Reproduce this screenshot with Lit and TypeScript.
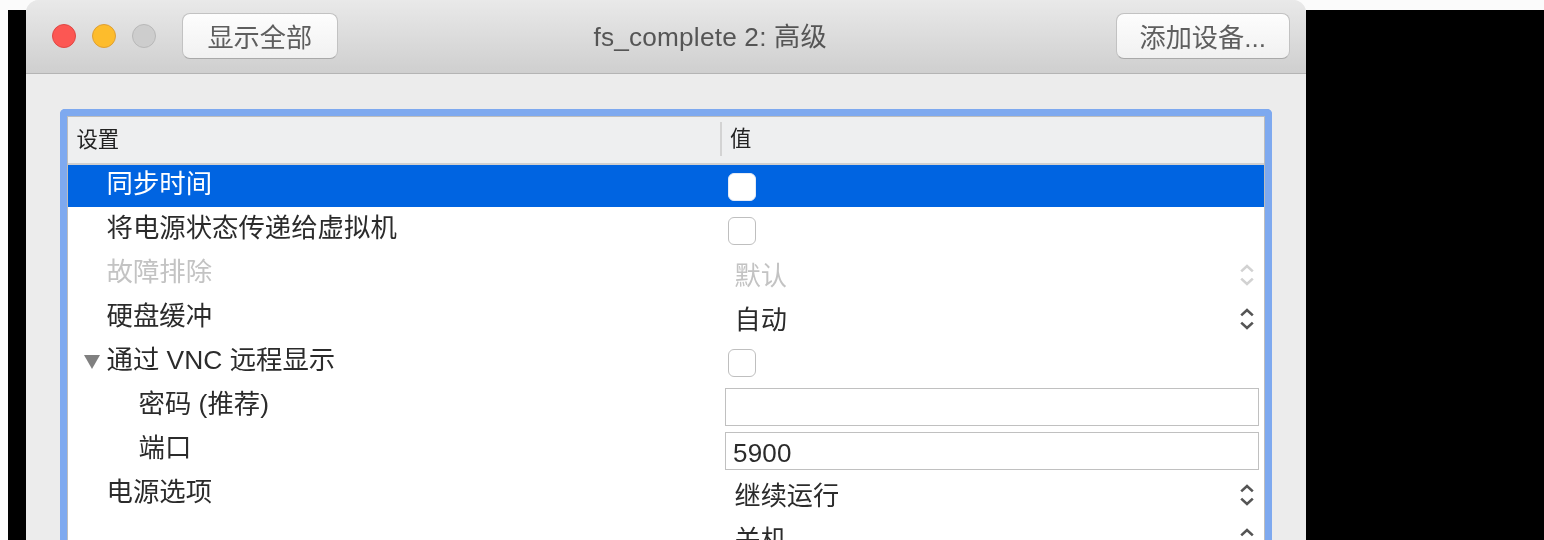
import { LitElement, html, css, nothing } from "lit";
import { customElement } from "lit/decorators.js";

type Row = {
  label: string;
  indent?: number;
  tri?: boolean;
  sel?: boolean;
  off?: boolean;
  kind: "check" | "select" | "input" | "none";
  value?: string;
};

const ROWS: Row[] = [
  { label: "同步时间", sel: true, kind: "check" },
  { label: "将电源状态传递给虚拟机", kind: "check" },
  { label: "故障排除", off: true, kind: "select", value: "默认" },
  { label: "硬盘缓冲", kind: "select", value: "自动" },
  { label: "通过 VNC 远程显示", tri: true, kind: "check" },
  { label: "密码 (推荐)", indent: 1, kind: "input", value: "" },
  { label: "端口", indent: 1, kind: "input", value: "5900" },
  { label: "电源选项", kind: "select", value: "继续运行" },
  { label: "", kind: "select", value: "关机" },
];

@customElement("app-root")
export class AppRoot extends LitElement {
  static styles = css`
    :host {
      display: block;
      width: 1544px;
      height: 540px;
      overflow: hidden;
      background: #fbfbfb;
      font-family: "Liberation Sans", "Noto Sans CJK SC", sans-serif;
    }
    .page { display: flex; height: 540px; }
    .edge-l { width: 18px; margin: 10px 0 0 8px; background: #000; }
    .edge-r { flex: 1; margin-top: 10px; background: #000; }
    .win {
      width: 1280px;
      height: 540px;
      display: flex;
      flex-direction: column;
      background: #ececec;
      border-radius: 13px 13px 0 0;
      overflow: hidden;
      filter: blur(0.35px);
    }
    .bar {
      height: 73px;
      flex: none;
      box-sizing: content-box;
      display: flex;
      align-items: center;
      padding: 0 16px 0 26px;
      background: linear-gradient(#e9e9e9, #cfcfcf);
      border-bottom: 1px solid #b4b4b4;
    }
    .left { display: flex; align-items: center; margin-top: -1px; }
    .dot { width: 24px; height: 24px; box-sizing: border-box; border-radius: 50%; margin-right: 16px; border: 1px solid; }
    .red { background: #fc5753; border-color: #df4744; }
    .yel { background: #fdbc2c; border-color: #de9f34; }
    .gry { background: #cdcdcd; border-color: #b8b8b8; margin-right: 25.5px; }
    .btn {
      height: 46px;
      box-sizing: border-box;
      display: flex;
      align-items: center;
      justify-content: center;
      border: 1px solid #c2c2c2;
      border-bottom-color: #a9a9a9;
      border-radius: 8px;
      background: linear-gradient(#fdfdfd, #f1f1f1);
      color: #5e5e5e;
      font-size: 26.2px;
    }
    .b1 { width: 156.5px; }
    .b2 { width: 174.5px; margin: -1px 0 0 auto; }
    .title { color: #555; font-size: 26.2px; letter-spacing: 0.2px; margin: -3px 0 0 255.5px; }
    .body { flex: 1; min-height: 0; padding: 35px 34px 0; }
    .ring {
      height: 100%;
      box-sizing: border-box;
      border: solid #7ea9ef;
      border-width: 7px 7px 0;
      border-radius: 5px 5px 0 0;
    }
    .tbl {
      height: 100%;
      box-sizing: border-box;
      background: #fff;
      border: solid #bdbdbd;
      border-width: 1px 1px 0;
      overflow: hidden;
    }
    .head {
      height: 46px;
      display: grid;
      grid-template-columns: 652px 1fr;
      align-items: center;
      background: #eeeff0;
      border-bottom: 2px solid #cfcfcf;
      color: #222;
      font-size: 21.3px;
    }
    .head div { padding-left: 8.5px; }
    .head .v { height: 34px; line-height: 34px; border-left: 2px solid #d3d3d3; margin-top: -2px; padding-left: 8px; }
    .head .k { margin-top: -6px; }
    .row {
      height: 44px;
      display: grid;
      grid-template-columns: 653px 1fr;
      color: #2b2b2b;
      font-size: 26.4px;
    }
    .row.sel {
      background: linear-gradient(#0064e1, #0064e1) top / 100% 42px no-repeat;
    }
    .row.sel .lab { color: #fff; }
    .row.off .lab, .row.off .val { color: #c3c3c3; }
    .lab { height: 39px; line-height: 39px; display: flex; align-items: center; padding-left: 38.5px; white-space: pre; }
    .lab.in1 { padding-left: 70.5px; }
    .tri {
      width: 16px;
      height: 14px;
      margin: 3px 6.5px 0 -22.5px;
      background: #808080;
      clip-path: polygon(0 0, 100% 0, 50% 100%);
    }
    .cell { display: flex; align-items: center; min-width: 0; }
    .check {
      width: 28px;
      height: 28px;
      box-sizing: border-box;
      margin-left: 7px;
      background: #fff;
      border: 1.5px solid #bfbfbf;
      border-radius: 6px;
    }
    .row.sel .check { border-color: #e4eaf5; }
    .val { flex: 1; margin: -2px 0 0 13.5px; color: #2b2b2b; font-size: 26.2px; }
    .chev { width: 14px; height: 22px; margin-right: 10px; flex: none; }
    .chev path { fill: none; stroke: #555; stroke-width: 2.6; }
    .row.off .chev path { stroke: #d2d2d2; }
    .field {
      width: 534px;
      height: 38px;
      box-sizing: border-box;
      margin-left: 4px;
      padding-left: 7px;
      border: 1.5px solid #c0c0c0;
      background: #fff;
      line-height: 38px;
      color: #2b2b2b;
      font-size: 26px;
    }
    .field span { display: block; margin-top: 1px; letter-spacing: 0.2px; }
  `;

  private chevrons() {
    return html`<svg class="chev" viewBox="0 0 14 22">
      <path d="M1.2 7.4 L7 2 L12.8 7.4"></path>
      <path d="M1.2 14.6 L7 20 L12.8 14.6"></path>
    </svg>`;
  }

  private valueCell(r: Row) {
    if (r.kind === "check") return html`<div class="check"></div>`;
    if (r.kind === "select") return html`<div class="val">${r.value}</div>${this.chevrons()}`;
    if (r.kind === "input") return html`<div class="field"><span>${r.value}</span></div>`;
    return nothing;
  }

  render() {
    return html`<div class="page">
      <div class="edge-l"></div>
      <div class="win">
        <div class="bar">
          <div class="left">
            <div class="dot red"></div>
            <div class="dot yel"></div>
            <div class="dot gry"></div>
            <div class="btn b1">显示全部</div>
          </div>
          <div class="title">fs_complete 2: 高级</div>
          <div class="btn b2">添加设备...</div>
        </div>
        <div class="body">
          <div class="ring">
            <div class="tbl">
              <div class="head"><div class="k">设置</div><div class="v">值</div></div>
              ${ROWS.map(
                (r) => html`<div class="row ${r.sel ? "sel" : ""} ${r.off ? "off" : ""}">
                  <div class="lab ${r.indent ? "in1" : ""}">${r.tri ? html`<span class="tri"></span>` : nothing}${r.label}</div>
                  <div class="cell">${this.valueCell(r)}</div>
                </div>`
              )}
            </div>
          </div>
        </div>
      </div>
      <div class="edge-r"></div>
    </div>`;
  }
}
